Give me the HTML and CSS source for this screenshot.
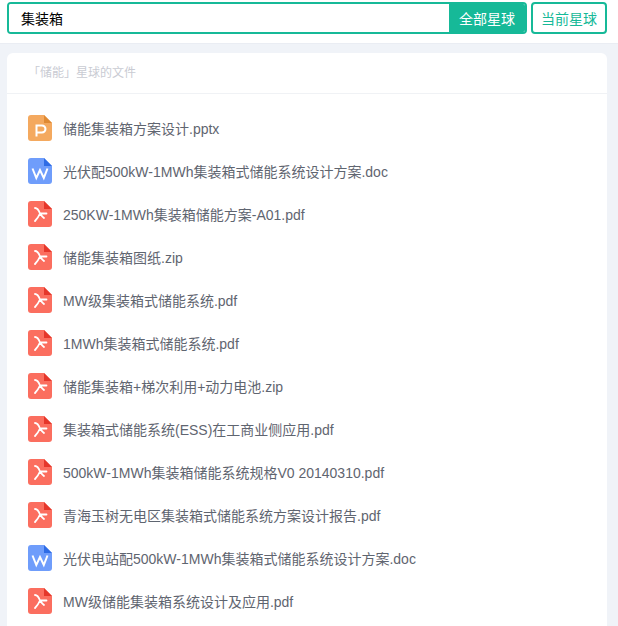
FILE: index.html
```html
<!DOCTYPE html>
<html lang="zh-CN">
<head>
<meta charset="utf-8">
<title>文件搜索</title>
<link rel="stylesheet" href="styles.css">
</head>
<body>
<svg class="defs" width="0" height="0">
  <symbol id="i-pdf" viewBox="0 0 24 26">
    <path d="M3 0H16L24 8V23a3 3 0 0 1-3 3H3a3 3 0 0 1-3-3V3a3 3 0 0 1 3-3z" fill="#fb6e5f"/>
    <path d="M16 0L24 8H16z" fill="#e5372b"/>
    <path d="M7 7Q10 7 12 12.500Q10 17 7 20M12 12.500H18.500M12 12.500Q14 15.500 16 17" fill="none" stroke="#fff" stroke-width="1.800" stroke-linecap="round"/>
  </symbol>
  <symbol id="i-doc" viewBox="0 0 24 26">
    <path d="M3 0H16L24 8V23a3 3 0 0 1-3 3H3a3 3 0 0 1-3-3V3a3 3 0 0 1 3-3z" fill="#6f9dfb"/>
    <path d="M16 0L24 8H16z" fill="#2f6ce5"/>
    <path d="M4.500 10.500L8.300 20L12 12L15.800 20L19.500 10.500" fill="none" stroke="#fff" stroke-width="2"/>
  </symbol>
  <symbol id="i-ppt" viewBox="0 0 24 26">
    <path d="M3 0H16L24 8V23a3 3 0 0 1-3 3H3a3 3 0 0 1-3-3V3a3 3 0 0 1 3-3z" fill="#f4a95f"/>
    <path d="M16 0L24 8H16z" fill="#df8a34"/>
    <path d="M8.500 21.500V10.500H14a3.500 3.500 0 0 1 0 7H8.500" fill="none" stroke="#fff" stroke-width="2"/>
  </symbol>
</svg>
<header class="topbar">
  <div class="search">
    <input class="search-input" type="text" value="集装箱">
    <button class="search-all" type="button">全部星球</button>
  </div>
  <button class="search-current" type="button">当前星球</button>
</header>
<main class="card">
  <div class="card-title">「储能」星球的文件</div>
  <ul class="files">
    <li class="file"><svg class="file-icon"><use href="#i-ppt"/></svg><span>储能集装箱方案设计.pptx</span></li>
    <li class="file"><svg class="file-icon"><use href="#i-doc"/></svg><span>光伏配500kW-1MWh集装箱式储能系统设计方案.doc</span></li>
    <li class="file"><svg class="file-icon"><use href="#i-pdf"/></svg><span>250KW-1MWh集装箱储能方案-A01.pdf</span></li>
    <li class="file"><svg class="file-icon"><use href="#i-pdf"/></svg><span>储能集装箱图纸.zip</span></li>
    <li class="file"><svg class="file-icon"><use href="#i-pdf"/></svg><span>MW级集装箱式储能系统.pdf</span></li>
    <li class="file"><svg class="file-icon"><use href="#i-pdf"/></svg><span>1MWh集装箱式储能系统.pdf</span></li>
    <li class="file"><svg class="file-icon"><use href="#i-pdf"/></svg><span>储能集装箱+梯次利用+动力电池.zip</span></li>
    <li class="file"><svg class="file-icon"><use href="#i-pdf"/></svg><span>集装箱式储能系统(ESS)在工商业侧应用.pdf</span></li>
    <li class="file"><svg class="file-icon"><use href="#i-pdf"/></svg><span>500kW-1MWh集装箱储能系统规格V0 20140310.pdf</span></li>
    <li class="file"><svg class="file-icon"><use href="#i-pdf"/></svg><span>青海玉树无电区集装箱式储能系统方案设计报告.pdf</span></li>
    <li class="file"><svg class="file-icon"><use href="#i-doc"/></svg><span>光伏电站配500kW-1MWh集装箱式储能系统设计方案.doc</span></li>
    <li class="file"><svg class="file-icon"><use href="#i-pdf"/></svg><span>MW级储能集装箱系统设计及应用.pdf</span></li>
  </ul>
</main>
</body>
</html>
```

FILE: styles.css
```css
* { box-sizing: border-box; }
html, body { margin: 0; height: 626px; overflow: hidden; }
body {
  background: #f0f3f8;
  font-family: "Liberation Sans", "Noto Sans CJK SC", sans-serif;
}
.defs { position: absolute; }
.topbar {
  display: flex;
  gap: 4px;
  height: 44px;
  padding: 2px 11px 0 7px;
  background: #fff;
  border-bottom: 1px solid #eaedf3;
}
.search {
  display: flex;
  width: 520px;
  height: 32px;
  border: 2px solid #16b998;
  border-radius: 4px;
  overflow: hidden;
}
.search-input {
  flex: 1;
  min-width: 0;
  border: 0;
  outline: 0;
  padding: 0 0 0 12px;
  font: inherit;
  font-size: 14px;
  color: #000;
  background: #fff;
}
.search-all, .search-current {
  padding: 0;
  font: inherit;
  font-size: 14px;
  cursor: pointer;
}
.search-all {
  width: 76px;
  border: 0;
  color: #fff;
  background: #16b998;
}
.search-current {
  width: 76px;
  height: 32px;
  border: 2px solid #16b998;
  border-radius: 4px;
  color: #16b998;
  background: #fff;
}
.card {
  margin: 9px 11px 0 7px;
  background: #fff;
  border-radius: 6px 6px 0 0;
}
.card-title {
  height: 41px;
  padding: 12px 0 0 21px;
  font-size: 12px;
  line-height: 17px;
  color: #c9cbd3;
  border-bottom: 1px solid #f0f2f5;
}
.files {
  list-style: none;
  margin: 0;
  padding: 12px 0 20px 21px;
}
.file {
  display: flex;
  align-items: center;
  gap: 11px;
  height: 43px;
  font-size: 14px;
  color: #5f6570;
}
.file-icon {
  flex: none;
  width: 24px;
  height: 26px;
}
```
